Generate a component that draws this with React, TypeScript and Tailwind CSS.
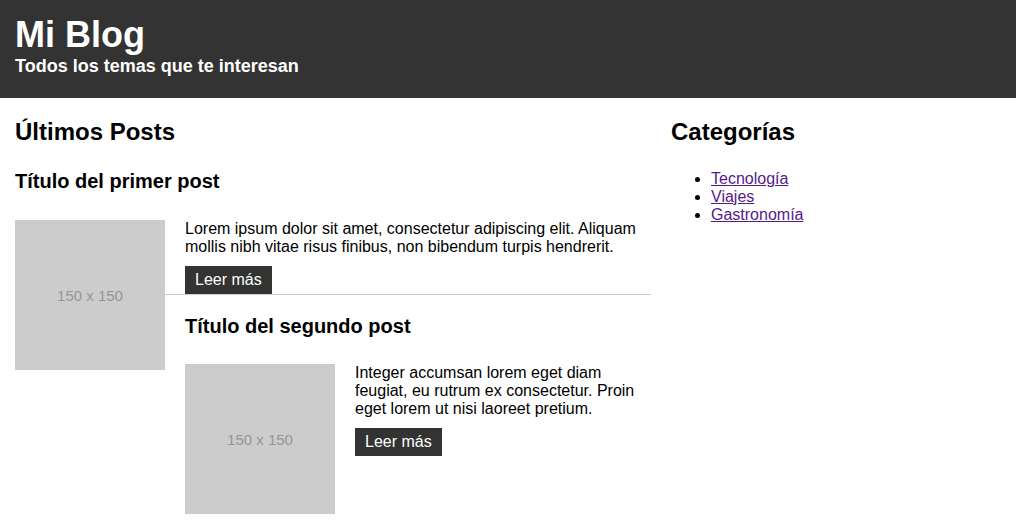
import React from "react";

function Placeholder() {
  return (
    <div className="float-left mr-[20px] w-[150px] h-[150px] bg-[#ccc] flex items-center justify-center text-[15px] text-[#969696]">
      150 x 150
    </div>
  );
}

function Post({ title, text, first }: { title: string; text: string; first?: boolean }) {
  return (
    <article className={first ? "border-b border-[#ccc] mb-[20px]" : "mb-[20px]"}>
      <h3 className={`text-[20px] font-bold mt-0 ${first ? "mb-[27px]" : "mb-[26px]"}`}>{title}</h3>
      <Placeholder />
      <p className="text-[16px] mb-[10px]">{text}</p>
      <a href="#" className="inline-block bg-[#333] text-white px-[10px] py-[5px] no-underline text-[16px]">
        Leer más
      </a>
    </article>
  );
}

export default function App() {
  return (
    <div className="leading-[normal] text-black bg-white min-h-[522px]" style={{ fontFamily: '"Liberation Sans", Arial, sans-serif' }}>
      <header className="bg-[#333] text-white px-[15px] pt-[14px] pb-[21px]">
        <h1 className="text-[36px] font-bold m-0">Mi Blog</h1>
        <p className="text-[18px] font-bold m-0">Todos los temas que te interesan</p>
      </header>
      <div className="flex gap-[20px] px-[15px]">
        <main className="w-[636px] shrink-0">
          <h2 className="text-[24px] font-bold mt-[20px] mb-[24px]">Últimos Posts</h2>
          <Post
            first
            title="Título del primer post"
            text="Lorem ipsum dolor sit amet, consectetur adipiscing elit. Aliquam mollis nibh vitae risus finibus, non bibendum turpis hendrerit."
          />
          <Post
            title="Título del segundo post"
            text="Integer accumsan lorem eget diam feugiat, eu rutrum ex consectetur. Proin eget lorem ut nisi laoreet pretium."
          />
        </main>
        <aside className="flex-1">
          <h2 className="text-[24px] font-bold mt-[20px] mb-[24px]">Categorías</h2>
          <ul className="list-disc pl-[40px] text-[16px]">
            <li><a href="#" className="text-[#551a8b] underline">Tecnología</a></li>
            <li><a href="#" className="text-[#551a8b] underline">Viajes</a></li>
            <li><a href="#" className="text-[#551a8b] underline">Gastronomía</a></li>
          </ul>
        </aside>
      </div>
    </div>
  );
}
